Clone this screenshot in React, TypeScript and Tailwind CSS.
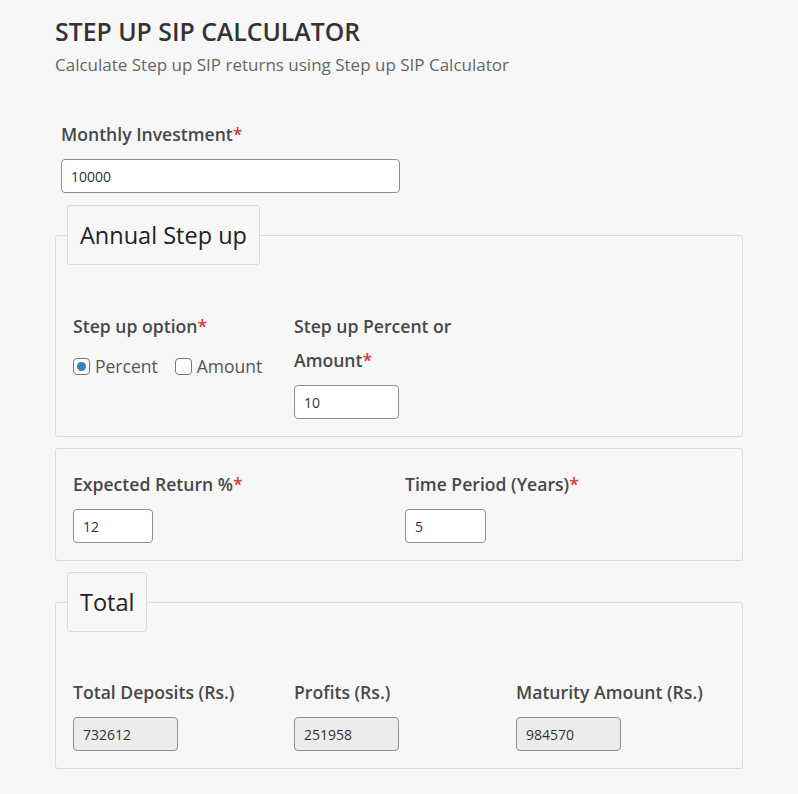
import type { ReactNode } from "react";

function Label({ children, required }: { children: ReactNode; required?: boolean }) {
  return (
    <label className="block text-[17.6px] font-semibold leading-[34px] text-[#484848]">
      {children}
      {required && <span className="text-[#d9363e]">*</span>}
    </label>
  );
}

function TextInput({ value, width, readOnly }: { value: string; width: string; readOnly?: boolean }) {
  return (
    <input
      type="text"
      defaultValue={value}
      readOnly={readOnly}
      className={`${width} h-[34px] rounded-[4px] border border-[#8f8f8f] px-[9px] text-[14px] text-[#333] outline-none ${
        readOnly ? "bg-[#ececec]" : "bg-white"
      }`}
    />
  );
}

function Legend({ children }: { children: ReactNode }) {
  return (
    <legend className="-ml-[6px] rounded-[3px] border border-[#dcdcdc] bg-[#f7f7f7] px-[12px] py-[11px] text-[23.5px] leading-[36px] text-[#222]">
      {children}
    </legend>
  );
}

export default function App() {
  return (
    <div className="min-h-screen bg-[#f7f7f7] px-[55px] pt-[15px] pb-[26px] font-['Open_Sans',sans-serif]">
      <h1 className="text-[24.8px] font-semibold leading-[32px] text-[#333]">STEP UP SIP CALCULATOR</h1>
      <p className="mt-[6px] text-[17px] leading-[24px] text-[#666]">
        Calculate Step up SIP returns using Step up SIP Calculator
      </p>

      <div className="mt-[40px] px-[6px]">
        <Label required>Monthly Investment</Label>
        <div className="mt-[8px]">
          <TextInput value="10000" width="w-[339px]" />
        </div>
      </div>

      <fieldset className="mt-[12px] rounded-[3px] border border-[#dcdcdc] px-[17px] pb-[17px]">
        <Legend>Annual Step up</Legend>
        <div className="mt-[44px] grid grid-cols-[221px_1fr]">
          <div>
            <Label required>Step up option</Label>
            <div className="mt-[10px] flex items-center gap-[17px] text-[17.5px] text-[#555]">
              <label className="flex items-center gap-[5px]">
                <span className="flex h-[17px] w-[17px] items-center justify-center rounded-[4px] border border-[#777] bg-white">
                  <span className="h-[9px] w-[9px] rounded-full bg-[#2f86b8]" />
                </span>
                Percent
              </label>
              <label className="flex items-center gap-[5px]">
                <span className="h-[17px] w-[17px] rounded-[4px] border border-[#777] bg-white" />
                Amount
              </label>
            </div>
          </div>
          <div>
            <div className="w-[180px]">
              <Label required>Step up Percent or Amount</Label>
            </div>
            <div className="mt-[8px]">
              <TextInput value="10" width="w-[105px]" />
            </div>
          </div>
        </div>
      </fieldset>

      <div className="mt-[11px] grid grid-cols-[332px_1fr] rounded-[3px] border border-[#dcdcdc] px-[17px] pt-[18px] pb-[17px]">
        <div>
          <Label required>Expected Return %</Label>
          <div className="mt-[8px]">
            <TextInput value="12" width="w-[80px]" />
          </div>
        </div>
        <div>
          <Label required>Time Period (Years)</Label>
          <div className="mt-[8px]">
            <TextInput value="5" width="w-[81px]" />
          </div>
        </div>
      </div>

      <fieldset className="mt-[11px] rounded-[3px] border border-[#dcdcdc] px-[17px] pb-[17px]">
        <Legend>Total</Legend>
        <div className="mt-[43px] grid grid-cols-[221px_222px_1fr]">
          <div>
            <Label>Total Deposits (Rs.)</Label>
            <div className="mt-[8px]">
              <TextInput value="732612" width="w-[105px]" readOnly />
            </div>
          </div>
          <div>
            <Label>Profits (Rs.)</Label>
            <div className="mt-[8px]">
              <TextInput value="251958" width="w-[105px]" readOnly />
            </div>
          </div>
          <div>
            <Label>Maturity Amount (Rs.)</Label>
            <div className="mt-[8px]">
              <TextInput value="984570" width="w-[105px]" readOnly />
            </div>
          </div>
        </div>
      </fieldset>
    </div>
  );
}
